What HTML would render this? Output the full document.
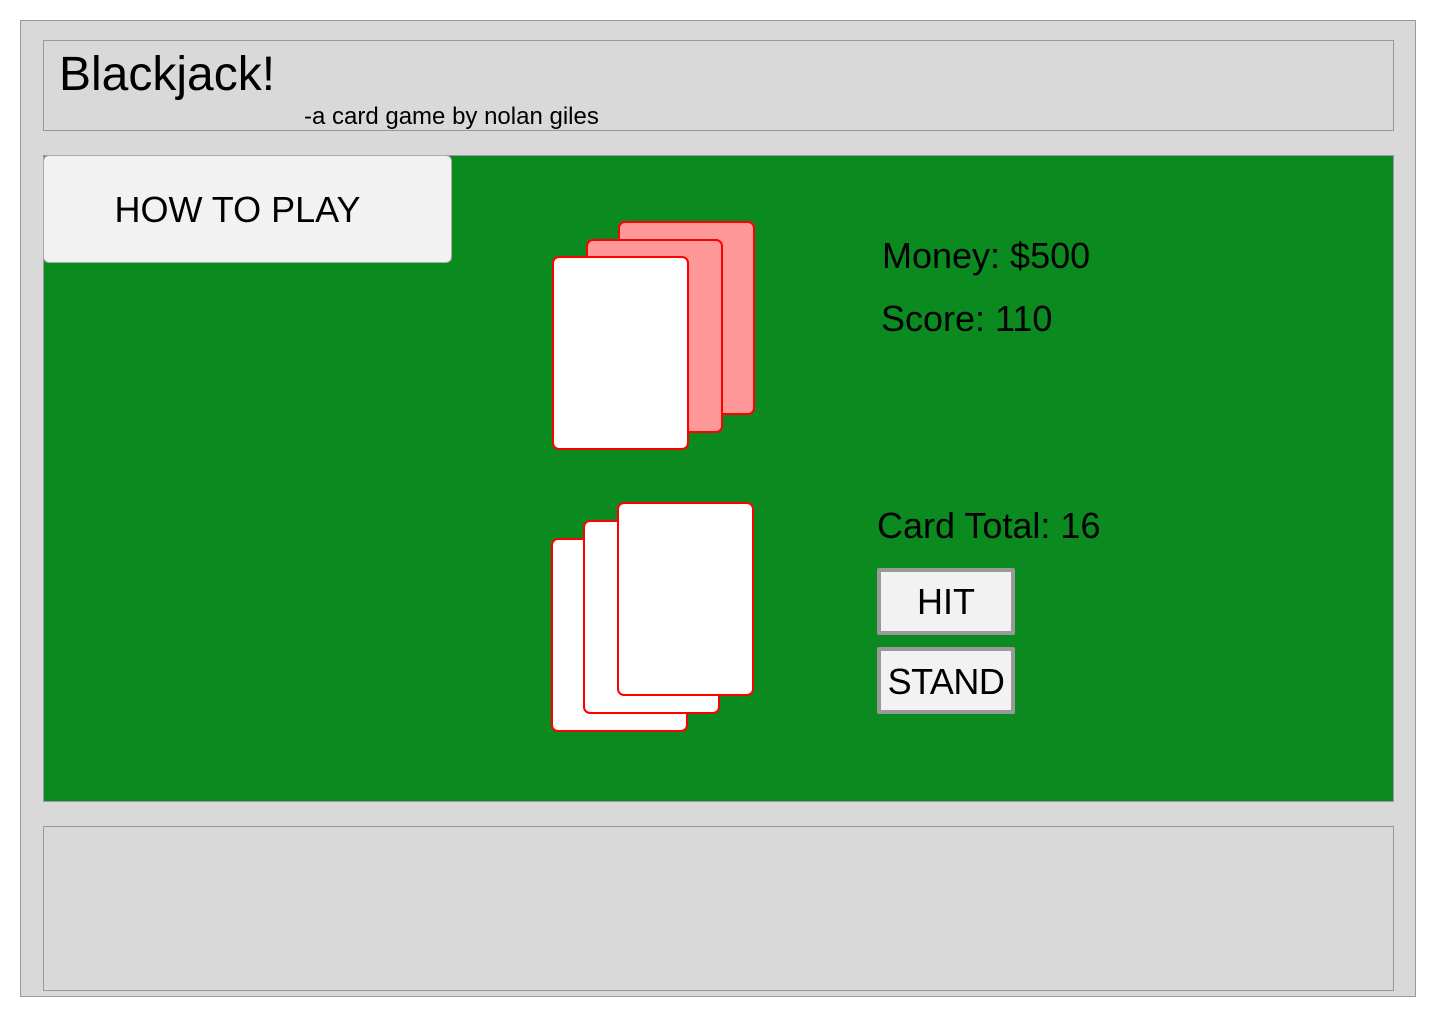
<!DOCTYPE html>
<html><head><style>
*{margin:0;padding:0;box-sizing:border-box}
body{width:1440px;height:1024px;background:#fff;position:relative;font-family:"Liberation Sans",Arial,sans-serif;overflow:hidden}
.a{position:absolute}
.card{position:absolute;width:137px;height:194px;border:2px solid #f00;border-radius:7px;background:#fff}
.pink{background:#ff9999}
.btn{position:absolute;left:877px;width:138px;background:#f2f2f2;border:4px solid #999;border-radius:2px;font-size:36px;text-align:center}
</style></head><body>
<div class="a" style="left:20px;top:20px;width:1396px;height:977px;background:#d9d9d9;border:1px solid #999"></div>
<div class="a" style="left:43px;top:40px;width:1351px;height:91px;border:1px solid #999"></div>
<div class="a" style="left:59px;top:48px;font-size:48px;line-height:54px">Blackjack!</div>
<div class="a" style="left:304px;top:103px;font-size:24px;line-height:28px">-a card game by nolan giles</div>
<div class="a" style="left:43px;top:155px;width:1351px;height:647px;background:#0b8a1f;border:1px solid #999"></div>
<div class="a" style="left:43px;top:155px;width:409px;height:108px;background:#f2f2f2;border:1px solid #aaa;border-radius:6px;font-size:36px;line-height:108px;text-align:center;padding-right:20px">HOW TO PLAY</div>
<div class="card pink" style="left:618px;top:221px"></div>
<div class="card pink" style="left:586px;top:239px"></div>
<div class="card" style="left:552px;top:256px"></div>
<div class="card" style="left:551px;top:538px"></div>
<div class="card" style="left:583px;top:520px"></div>
<div class="card" style="left:617px;top:502px"></div>
<div class="a" style="left:882px;top:235px;font-size:36px;line-height:42px">Money: $500</div>
<div class="a" style="left:881px;top:298px;font-size:36px;line-height:42px">Score: 110</div>
<div class="a" style="left:877px;top:505px;font-size:36px;line-height:42px">Card Total: 16</div>
<div class="btn" style="top:568px;height:67px;line-height:59px">HIT</div>
<div class="btn" style="top:647px;height:67px;line-height:62px;letter-spacing:-0.5px">STAND</div>
<div class="a" style="left:43px;top:826px;width:1351px;height:165px;border:1px solid #999"></div>
</body></html>
